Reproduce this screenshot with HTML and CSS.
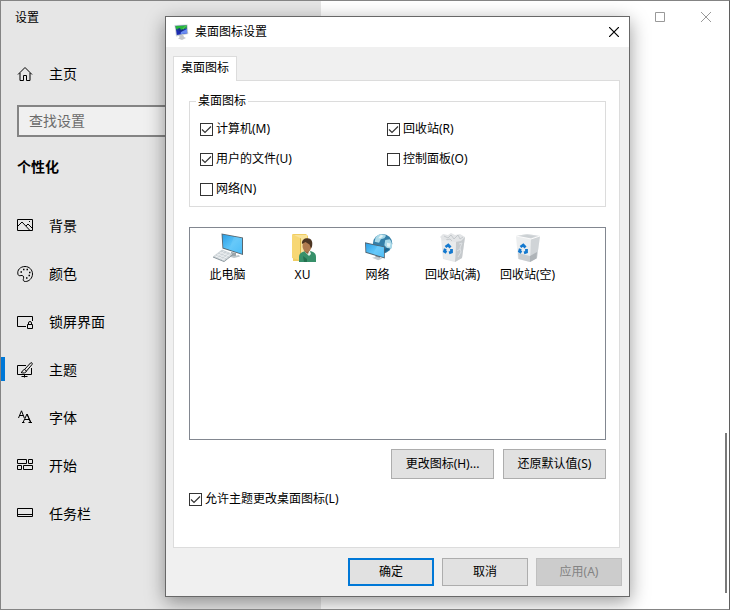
FILE: index.html
```html
<!DOCTYPE html>
<html lang="zh-CN">
<head>
  <meta charset="UTF-8">
  <meta name="viewport" content="width=device-width, initial-scale=1.0">
  <title>设置</title>
  <link rel="stylesheet" href="styles.css">
</head>
<body>
  <div class="window">
    <aside class="sidebar">
      <div class="window-title">设置</div>
      <a class="nav-item home" href="#">
        <svg class="nav-icon" viewBox="0 0 16 16"><path d="M1 8.5 8 1.5l7 7M3 7v7.500h3.500V9.500h3v5H13V7"/></svg>
        主页
      </a>
      <input class="search" type="text" placeholder="查找设置" aria-label="查找设置">
      <h2 class="section-title">个性化</h2>
      <nav>
        <a class="nav-item" href="#">
          <svg class="nav-icon" viewBox="0 0 16 16"><path d="M.5 1.500h15v11H.5zM1 8l4-4 7.500 8M9 8l2-2 4 4"/><path d="M12 3.500h1"/></svg>
          背景
        </a>
        <a class="nav-item" href="#">
          <svg class="nav-icon" viewBox="0 0 16 16"><path d="M1 8.500C-.3 4 3.500.5 8 .5c4.300 0 7.500 3.300 7.500 7.500S12 15.500 8.500 15.500c-2.500 0-2.500-1.500-2-3 .5-2-.5-3.500-2.500-3-1.200.4-2.500.3-3-1z"/><path d="M3.500 6h1.500M6 3.500h1.500M9.500 3.500H11M12 6.500h1.500M11.500 9.500H13M9 12h1.500" stroke-width="1.500"/></svg>
          颜色
        </a>
        <a class="nav-item" href="#">
          <svg class="nav-icon" viewBox="0 0 16 16"><path d="M9 12.500H.5v-10h15V7M10.500 10.500h5v4h-5zM11.500 10.500v-1.500a1.500 1.500 0 0 1 3 0v1.500"/></svg>
          锁屏界面
        </a>
        <a class="nav-item active" href="#">
          <svg class="nav-icon" viewBox="0 0 16 16"><path d="M9 3.500H.5v9h14V6M7.500 12.500v3M4.500 14.500h6"/><path d="m7.500 7.500 6-6.500c1-1 2.300.2 1.500 1.500L9.500 9zM7.500 7.500C5.500 7.500 6 10 4 10.500c2.500 1 5 .5 5.500-1.500"/></svg>
          主题
        </a>
        <a class="nav-item" href="#">
          <svg class="nav-icon" viewBox="0 0 16 16"><path d="M1.500 8 4.500.8 7.300 8M2.500 5.500h4M6 12.500 10 4l4 8.500M7.500 9.500h5M5 12.500h2.500M11.500 12.500H15"/><path d="m10 4 3.500 8.500"/></svg>
          字体
        </a>
        <a class="nav-item" href="#">
          <svg class="nav-icon" viewBox="0 0 16 16"><path d="M.5 1.500h9v4h-9zM11.500 1.500h4v4h-4zM.5 7.500h4v4h-4zM6.500 7.500h9v4h-9z"/></svg>
          开始
        </a>
        <a class="nav-item" href="#">
          <svg class="nav-icon" viewBox="0 0 16 16"><path d="M.5 2.500h15v8H.5zM.5 8.500h15"/></svg>
          任务栏
        </a>
      </nav>
    </aside>

    <main class="content">
      <div class="window-controls">
        <button type="button" aria-label="最大化"><svg viewBox="0 0 10 10"><path d="M.5.5h9v9h-9z"/></svg></button>
        <button type="button" aria-label="关闭"><svg viewBox="0 0 10 10"><path d="m0 0 10 10M10 0 0 10"/></svg></button>
      </div>
      <div class="scroll-thumb"></div>
    </main>

    <section class="dialog" role="dialog" aria-labelledby="dialogTitle">
      <header class="dialog-header">
        <svg class="dialog-icon" viewBox="0 0 16 16">
          <path d="m5 11 4-.5 1 2.500 2 1-4 2-4-1.500 1.500-1z" fill="#c5c7c9"/>
          <path d="M.5 1 13.500.5l.8 9.500L2 12.500z" fill="#c7d0d4"/>
          <path d="m1.500 2 11-.5.7 7.800L2.800 11z" fill="#1c2bb0"/>
          <path d="m1.500 2 11-.5.3 3-4 .5L6 7 2 5z" fill="#28b63c"/>
          <path d="m3 5 3-1 1 2 5-3-4 5-3-1z" fill="#14318a"/>
          <path d="m7 8 6-3 .2 4.300-6.700 1z" fill="#6a8df2"/>
          <path d="m8 5 4-4 1 .5-3.500 4z" fill="#4acb4c"/>
        </svg>
        <h1 class="dialog-title" id="dialogTitle">桌面图标设置</h1>
        <button class="dialog-close" type="button" aria-label="关闭"><svg viewBox="0 0 10 10"><path d="m0 0 10 10M10 0 0 10"/></svg></button>
      </header>

      <div class="dialog-body">
        <div class="tabs" role="tablist">
          <button class="tab" type="button" role="tab" aria-selected="true">桌面图标</button>
        </div>
        <div class="panel" role="tabpanel">
          <fieldset class="group">
            <legend>桌面图标</legend>
            <div class="check-grid">
              <label class="check"><input type="checkbox" checked>计算机(M)</label>
              <label class="check"><input type="checkbox" checked>回收站(R)</label>
              <label class="check"><input type="checkbox" checked>用户的文件(U)</label>
              <label class="check"><input type="checkbox">控制面板(O)</label>
              <label class="check"><input type="checkbox">网络(N)</label>
            </div>
          </fieldset>

          <ul class="icon-list">
            <li>
              <svg viewBox="0 0 32 32">
                <defs>
                  <linearGradient id="screen" x1="0" y1="0" x2="1" y2="1"><stop offset="0" stop-color="#2b9fe6"/><stop offset=".5" stop-color="#5cc4f8"/><stop offset="1" stop-color="#2fb0f5"/></linearGradient>
                </defs>
                <path d="m19 20 5 1v4l-5-1z" fill="#9aa4a9"/>
                <path d="m15 22 7 2 5-1 1 1.500-6 1.500-8-2.500z" fill="#bcc4c8"/>
                <path d="m9.500 1.500 21.500 4v17.500L10.500 16.500z" fill="#58666e"/>
                <path d="m10.500 2.500 19.500 3.800v15.500L11.300 15.800z" fill="url(#screen)"/>
                <path d="m22 4.800 8 1.500v15.500L17 17.600z" fill="#77d0fb" opacity=".4"/>
                <path d="m10 17.500 11 4.500-9 7-11-4.500z" fill="#ccd3d7"/>
                <path d="m1 24.500 11 4.500 9-7v1l-9 7-11-4.500z" fill="#87939a"/>
                <path d="m7.500 20 10.500 4.200M5 22l10.500 4.200M3 23.800 13 28M12.500 19 4 25M15.500 20.300 7 26.500M18.500 21.500l-8.500 6.500" stroke="#f5f7f8" stroke-width=".7"/>
              </svg>
              此电脑
            </li>
            <li>
              <svg viewBox="0 0 32 32">
                <path d="M6 2h13l2 2v22l-8 3H6z" fill="#f0cd63"/>
                <path d="M7 3h13v22l-7 2z" fill="#f9e39b"/>
                <path d="m5 2 8 4v22l-8-2z" fill="#f7d774"/>
                <path d="m13 6 1 .5V27l-1 1z" fill="#d9b448"/>
                <g transform="translate(-2 -1)">
                  <path d="M14 31v-5c0-4 4-6 9-6s8 2 8 6v5z" fill="#37906a"/>
                  <path d="m20 20 5 0 1 3-2 2-4-4z" fill="#e8f0e8"/>
                  <path d="m20 19 4 1-1 3-3-2z" fill="#8e5b37"/>
                  <ellipse cx="22" cy="15" rx="4.500" ry="6" fill="#b07b50"/>
                  <path d="M17 13c-.5-4 2.500-6 5.500-5.800 4.500.3 5.500 4 4.500 8.300l-1 2-1.500-4-4-2.500z" fill="#4c3523"/>
                  <path d="m18 25 4 3v3h-3z" fill="#23704f"/>
                </g>
              </svg>
              XU
            </li>
            <li>
              <svg viewBox="0 0 32 32">
                <g transform="translate(3 1) scale(.88)">
                  <circle cx="20" cy="12" r="11" fill="#347fa8"/>
                  <path d="M12 5c3-4 8-4.500 12-2l-2 3-4 1-2 4-5-1zM23 8l5-1c3 3 3.500 8 2 11l-5-1-3-3z" fill="#a9d9e8"/>
                  <path d="m18 2 3 1-3 3-3 0zM25 11l4 1-1 4-3-1z" fill="#e2f3f5"/>
                  <path d="M13 20c5 4 12 2 15-2l-4-1-4 3z" fill="#1c648f"/>
                  <path d="m12 24 5 1v4l-5-1z" fill="#8b969c"/>
                  <path d="m8 28 5-1 7 2-5 2z" fill="#c3cbd0"/>
                  <path d="m0 10.500 22.500 5v13.500L.5 22.500z" fill="#526572"/>
                  <path d="m1 11.800 20.500 4.500v11.200L1.500 21.700z" fill="url(#screen)"/>
                  <path d="m14 14.700 7.500 1.600v11.200L9 24z" fill="#82d4fc" opacity=".4"/>
                </g>
              </svg>
              网络
            </li>
            <li>
              <svg viewBox="0 0 32 32">
                <path d="m4 5 15 3 9-3-3 21-7 4-12-3z" fill="#e4e6e8"/>
                <path d="m19 8 9-3-3 21-7 4z" fill="#c6cacd"/>
                <path d="m3 5 3-3 5 1 3-2 4 2 5-1 5 3-4 4-6 1-6-2-5 1z" fill="#e3e5e7"/>
                <path d="m7 4 4 2 3-3 3 4 4-4 2 4 3-2M9 8l4-1 2 2" fill="none" stroke="#bcc1c5" stroke-width=".8"/>
                <path d="m5 9 4-1 4 2h6l-1 19-11-2.500z" fill="#e9ebec"/>
                <path d="m22 12 3-1-2 5 1 4-3 5M20 19l3-2" fill="none" stroke="#dde0e3"/>
                <g class="recycle-mark"><path d="m8.500 15 2.700-2 2.300 2.500"/><path d="m14.500 17 0 3-2.500.8"/><path d="m9.500 20.500-2-1.200.8-2.500"/></g>
              </svg>
              回收站(满)
            </li>
            <li>
              <svg viewBox="0 0 32 32">
                <path d="m4 4 11-2 13 2-3 22-7 4-12-3z" fill="#eceeef"/>
                <path d="m4 4 11-2 13 2-9 3z" fill="#d9dcdf"/>
                <path d="m7 4 8-1 9 1-5 2z" fill="#cbd0d3"/>
                <path d="m19 7 9-3-3 22-7 4z" fill="#d0d4d7"/>
                <path d="m6 21 12 3v6L6.500 27z" fill="#c9cdd0"/>
                <path d="m18 24 7-4-.5 6.500L18 30z" fill="#afb4b8"/>
                <path d="m4 4 15 3 9-3" fill="none" stroke="#fafafa"/>
                <g class="recycle-mark"><path d="m8.500 15 2.700-2 2.300 2.500"/><path d="m14.500 17 0 3-2.500.8"/><path d="m9.500 20.500-2-1.200.8-2.500"/></g>
              </svg>
              回收站(空)
            </li>
          </ul>

          <div class="panel-actions">
            <button class="btn btn-wide" type="button">更改图标(H)...</button>
            <button class="btn btn-wide" type="button">还原默认值(S)</button>
          </div>
          <label class="check allow-themes"><input type="checkbox" checked>允许主题更改桌面图标(L)</label>
        </div>

        <footer class="dialog-footer">
          <button class="btn btn-default" type="button">确定</button>
          <button class="btn" type="button">取消</button>
          <button class="btn" type="button" disabled>应用(A)</button>
        </footer>
      </div>
    </section>
  </div>
</body>
</html>
```
FILE: styles.css
```css
* {
  box-sizing: border-box;
}
body {
  margin: 0;
  font-family: "Noto Sans", "Noto Sans CJK SC", sans-serif;
  font-size: 12px;
  line-height: 16px;
  color: #000;
}
button, input {
  font: inherit;
  color: inherit;
}
svg {
  display: block;
  flex: none;
}

/* settings window */
.window {
  position: relative;
  display: flex;
  min-height: 100vh;
  border: 1px solid #848484;
  border-right-color: #5f5f5f;
  background: #fff;
  overflow: hidden;
}
.sidebar {
  flex: none;
  width: 320px;
  background: #e6e6e6;
  font-size: 14px;
  line-height: 20px;
}
.window-title {
  padding-left: 14px;
  font-size: 12px;
  line-height: 34px;
}
.nav-item {
  display: flex;
  align-items: center;
  gap: 16px;
  height: 48px;
  padding-left: 16px;
  color: #000;
  text-decoration: none;
}
.nav-item.home {
  margin-top: 15px;
}
.nav-item.active {
  background: linear-gradient(#0078d7, #0078d7) no-repeat left 11px / 4px 24px;
}
.nav-icon {
  width: 16px;
  height: 16px;
  fill: none;
  stroke: #000;
}
.search {
  display: block;
  width: 288px;
  height: 32px;
  margin: 7px 0 0 16px;
  padding: 0 10px 2px;
  border: 2px solid #848484;
  border-radius: 0;
  background: #f0f0f0;
}
.search::placeholder {
  color: #6b6b6b;
}
.section-title {
  margin: 20px 0 25px 16px;
  font-size: 14px;
  line-height: 20px;
  font-weight: bold;
}
.content {
  flex: 1;
  display: flex;
  flex-direction: column;
  align-items: flex-end;
  justify-content: space-between;
}
.window-controls {
  display: flex;
}
.window-controls button {
  display: flex;
  align-items: center;
  justify-content: center;
  width: 46px;
  height: 32px;
  padding: 0;
  border: none;
  background: none;
}
.window-controls svg {
  width: 10px;
  height: 10px;
  fill: none;
  stroke: #999;
}
.scroll-thumb {
  width: 2px;
  height: 160px;
  margin: 0 2px 16px 0;
  background: #7a7a7a;
}

/* dialog */
.dialog {
  position: absolute;
  top: 15px;
  left: 164px;
  width: 465px;
  border: 1px solid #686868;
  background: #f0f0f0;
  box-shadow: 0 5px 18px rgba(0, 0, 0, 0.4);
}
.dialog-header {
  display: flex;
  align-items: center;
  height: 30px;
  padding-left: 8px;
  background: #fff;
}
.dialog-icon {
  width: 16px;
  height: 16px;
}
.dialog-title {
  flex: 1;
  margin: 0 0 0 5px;
  font-size: 12px;
  font-weight: normal;
}
.dialog-close {
  display: flex;
  align-items: center;
  justify-content: center;
  width: 30px;
  height: 30px;
  padding: 0;
  border: none;
  background: none;
}
.dialog-close svg {
  width: 10px;
  height: 10px;
  stroke: #000;
  stroke-width: 1.2;
}
.dialog-body {
  padding: 9px 7px 10px;
}
.tabs {
  display: flex;
}
.tab {
  position: relative;
  height: 25px;
  margin-bottom: -1px;
  padding: 0 7px 2px;
  border: 1px solid #dcdcdc;
  border-bottom: none;
  background: #fff;
}
.panel {
  margin-right: 2px;
  padding: 12px 13px 40px 15px;
  border: 1px solid #dcdcdc;
  background: #fff;
}
.group {
  min-width: 0;
  margin: 0;
  padding: 0 6px 2px;
  border: 1px solid #dcdcdc;
}
.group legend {
  padding: 0 2px;
}
.check-grid {
  display: grid;
  grid-template-columns: 187px 1fr;
  grid-auto-rows: 30px;
  margin-top: 5px;
  padding-left: 4px;
}
.check {
  display: flex;
  align-items: center;
  gap: 3px;
}
.check input {
  flex: none;
  appearance: none;
  width: 13px;
  height: 13px;
  margin: 0;
  border: 1px solid #333;
  background: #fff;
}
.check input:checked {
  background: #fff url("data:image/svg+xml,%3Csvg xmlns='http://www.w3.org/2000/svg' viewBox='0 0 11 11'%3E%3Cpath d='M1 5.500l3 3 6-6' fill='none' stroke='%23333' stroke-width='1.200'/%3E%3C/svg%3E") center / 11px 11px;
}

/* icon list */
.icon-list {
  display: flex;
  align-items: flex-start;
  height: 213px;
  margin: 20px 0 0;
  padding: 4px 0 0;
  border: 1px solid #828790;
  list-style: none;
}
.icon-list li {
  display: flex;
  flex-direction: column;
  align-items: center;
  gap: 3px;
  width: 75px;
}
.icon-list svg {
  width: 32px;
  height: 32px;
}
.recycle-mark {
  fill: none;
  stroke: #1479cf;
  stroke-width: 2.8;
}

/* buttons */
.btn {
  width: 86px;
  height: 28px;
  padding: 0;
  border: 1px solid #adadad;
  background: #e1e1e1;
}
.btn:disabled {
  border-color: #bfbfbf;
  background: #ccc;
  color: #838383;
}
.btn-wide {
  width: 103px;
  height: 30px;
}
.btn-default {
  border: 2px solid #0078d7;
}
.panel-actions {
  display: flex;
  justify-content: flex-end;
  gap: 9px;
  margin-top: 9px;
}
.allow-themes {
  margin-top: 12px;
}
.dialog-footer {
  display: flex;
  justify-content: flex-end;
  gap: 8px;
  margin-top: 10px;
}
```
